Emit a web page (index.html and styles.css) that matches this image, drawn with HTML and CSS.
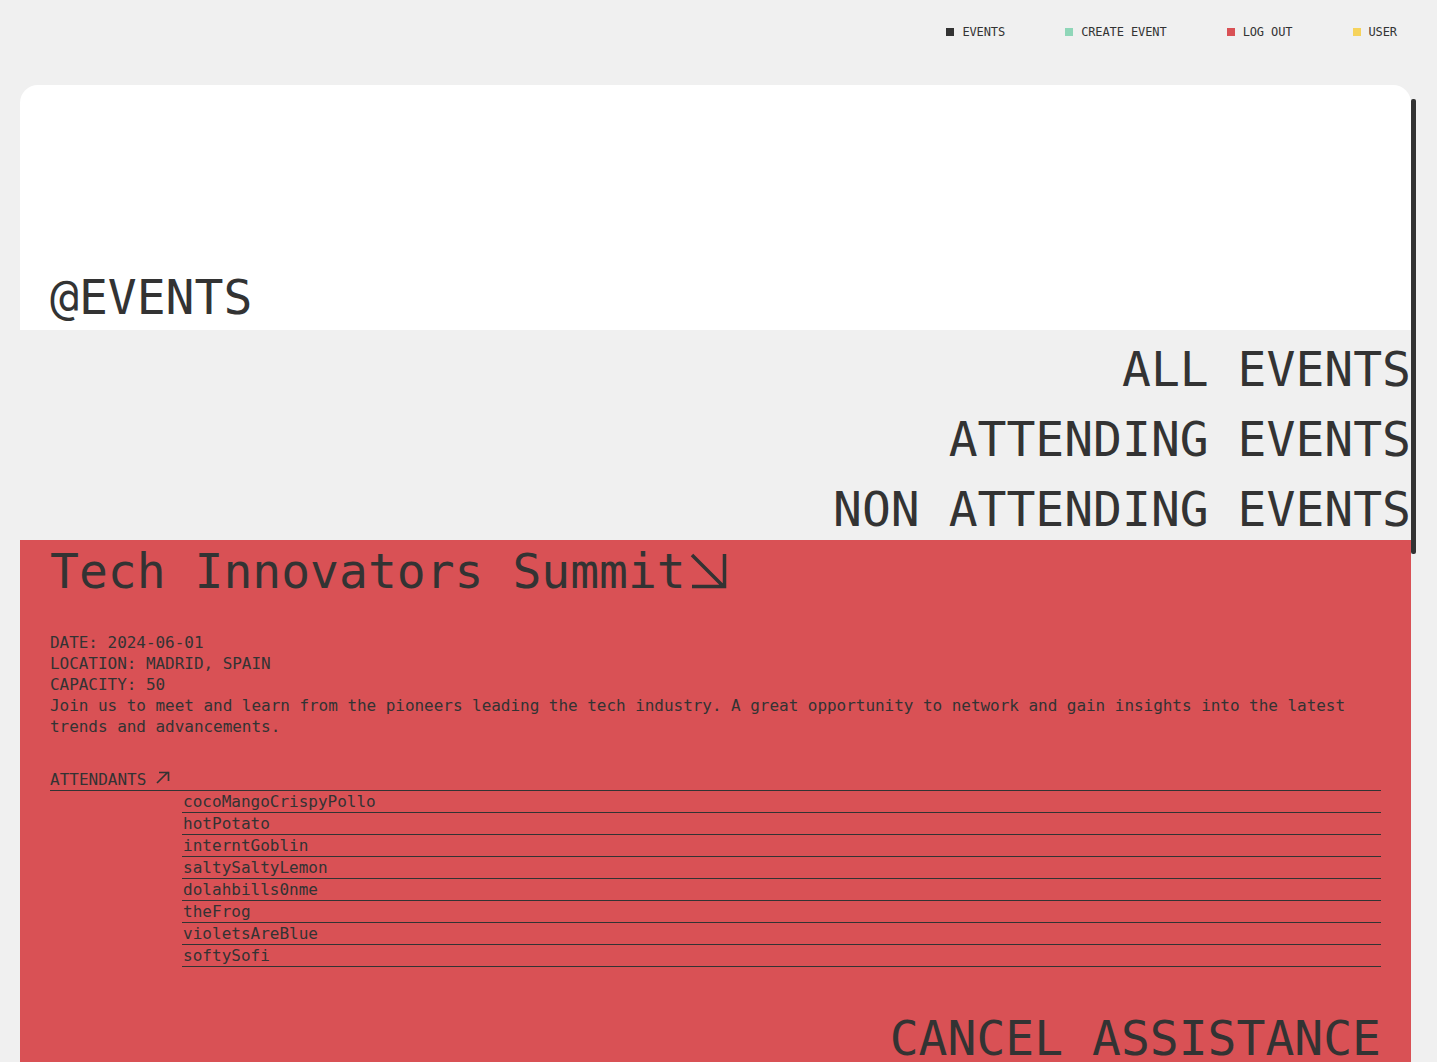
FILE: index.html
```html
<!DOCTYPE html>
<html lang="en">
<head>
<meta charset="utf-8">
<title>@EVENTS</title>
<link rel="stylesheet" href="styles.css">
</head>
<body>
<nav class="topnav">
  <a class="nav-link" href="#"><span class="dot dot-dark"></span>EVENTS</a>
  <a class="nav-link" href="#"><span class="dot dot-mint"></span>CREATE EVENT</a>
  <a class="nav-link" href="#"><span class="dot dot-red"></span>LOG OUT</a>
  <a class="nav-link" href="#"><span class="dot dot-yellow"></span>USER</a>
</nav>
<div class="card-wrap">
  <main class="card">
    <header class="hero">
      <h1 class="hero-title">@EVENTS</h1>
    </header>
    <ul class="filters">
      <li>ALL EVENTS</li>
      <li>ATTENDING EVENTS</li>
      <li>NON ATTENDING EVENTS</li>
    </ul>
    <section class="events">
      <article class="event event-red">
        <h2 class="event-title">Tech Innovators Summit<svg class="arrow-big" viewBox="0 0 38 38" width="38" height="38"><path d="M3 3 L34 34 M35.5 2 V36.25 M3 34.5 H37.25" fill="none" stroke="#333" stroke-width="3.5"/></svg></h2>
        <div class="event-info">
          <p>DATE: 2024-06-01</p>
          <p>LOCATION: MADRID, SPAIN</p>
          <p>CAPACITY: 50</p>
          <p>Join us to meet and learn from the pioneers leading the tech industry. A great opportunity to network and gain insights into the latest trends and advancements.</p>
        </div>
        <div class="attendants">
          <div class="att-head">ATTENDANTS<svg class="arrow-small" viewBox="0 0 14 14" width="14" height="14"><path d="M1 13 L12 2 M3 2.5 H13.2 M12.5 1.8 V11" fill="none" stroke="#333" stroke-width="1.7"/></svg></div>
          <ul class="att-list">
            <li>cocoMangoCrispyPollo</li>
            <li>hotPotato</li>
            <li>interntGoblin</li>
            <li>saltySaltyLemon</li>
            <li>dolahbills0nme</li>
            <li>theFrog</li>
            <li>violetsAreBlue</li>
            <li>softySofi</li>
          </ul>
        </div>
        <div class="event-actions">
          <button class="btn-cancel" type="button">CANCEL ASSISTANCE</button>
        </div>
      </article>
    </section>
  </main>
  <div class="scroll-thumb"></div>
</div>
</body>
</html>
```
FILE: styles.css
```css
* { box-sizing: border-box; }
html, body {
  margin: 0;
  height: 100%;
}
body {
  background: #f0f0f0;
  color: #333;
  font-family: "DejaVu Sans Mono", "Liberation Mono", monospace;
  overflow: hidden;
  display: flex;
  flex-direction: column;
}
.topnav {
  height: 64px;
  flex: none;
  display: flex;
  justify-content: flex-end;
  align-items: center;
  gap: 60px;
  padding: 0 40px;
}
.nav-link {
  display: inline-flex;
  align-items: center;
  gap: 8px;
  font-size: 12px;
  line-height: 14px;
  letter-spacing: -0.1px;
  color: #333;
  text-decoration: none;
}
.dot {
  width: 8px;
  height: 8px;
  display: inline-block;
}
.dot-dark { background: #333; }
.dot-mint { background: #8fd6b8; }
.dot-red { background: #d95155; }
.dot-yellow { background: #f6d35c; }

.card-wrap {
  flex: 1;
  min-height: 0;
  position: relative;
  margin: 21px 26px 0 20px;
}
.card {
  height: 100%;
  overflow: hidden;
}
.scroll-thumb {
  position: absolute;
  top: 14px;
  right: -5px;
  width: 5px;
  height: 455px;
  background: #333;
  border-radius: 2px;
}

.hero {
  height: 245px;
  background: #fff;
  border-radius: 18px 18px 0 0;
  display: flex;
  align-items: flex-end;
  padding: 0 30px 3px;
}
.hero-title {
  margin: 0;
  font-size: 48px;
  line-height: 1.2;
  font-weight: normal;
}
.filters {
  list-style: none;
  margin: 0;
  padding: 4px 0 0;
  height: 210px;
  background: #f0f0f0;
  text-align: right;
  font-size: 48px;
  line-height: 70px;
  white-space: nowrap;
}
.event {
  padding: 3px 30px 20px;
}
.event-red { background: #d95155; }
.event-title {
  margin: 0;
  font-size: 48px;
  line-height: 1.2;
  font-weight: normal;
}
.arrow-big {
  margin-left: 3px;
  vertical-align: -2px;
}
.event-info {
  margin-top: 31px;
  font-size: 16px;
  line-height: 21px;
  letter-spacing: -0.04px;
}
.event-info p { margin: 0; }
.attendants {
  margin-top: 32px;
  font-size: 16px;
  line-height: 21px;
}
.att-head {
  border-bottom: 1px solid #333;
  display: flex;
  align-items: flex-start;
  gap: 10px;
}
.arrow-small { margin-top: 1px; }
.att-list {
  list-style: none;
  margin: 0 0 0 calc(10% - 1px);
  padding: 0;
}
.att-list li {
  border-bottom: 1px solid #333;
  padding-left: 1px;
}
.event-actions {
  margin-top: 43px;
  text-align: right;
}
.btn-cancel {
  background: none;
  border: none;
  padding: 0;
  font-family: inherit;
  font-size: 48px;
  line-height: 1.2;
  color: #333;
  cursor: pointer;
}
```
